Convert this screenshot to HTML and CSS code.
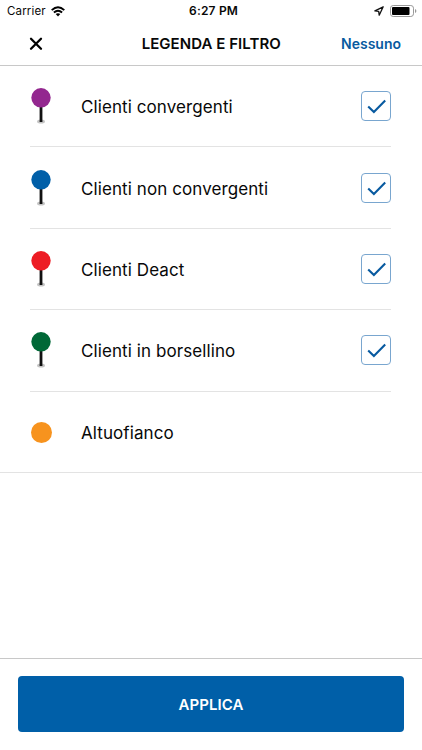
FILE: index.html
```html
<!DOCTYPE html>
<html lang="it">
<head>
<meta charset="utf-8">
<title>Legenda e filtro</title>
<link rel="stylesheet" href="styles.css">
</head>
<body>
<svg class="defs" aria-hidden="true">
  <symbol id="pin" viewBox="0 0 22 38">
    <ellipse cx="11" cy="34.6" rx="4" ry="2" fill="#c4c4c4"/>
    <rect x="9.6" y="18" width="2.8" height="17" fill="#111"/>
    <circle cx="11" cy="10.8" r="9.7" fill="currentColor"/>
  </symbol>
  <symbol id="check" viewBox="0 0 30 30">
    <rect x=".5" y=".5" width="29" height="29" rx="3.5" fill="#fff" stroke="#79a6cf"/>
    <path d="M7.2 15.4L12.9 21.1L24.2 9.6" fill="none" stroke="#085aa0" stroke-width="2.1"/>
  </symbol>
</svg>
<div class="screen">
  <div class="status">
    <span class="carrier">Carrier</span>
    <svg class="wifi" viewBox="0 0 14 11" fill="none" stroke="#000" stroke-width="1.9">
      <path d="M.7 4.1Q7-1.7 13.3 4.1"/>
      <path d="M2.9 6.5Q7 2.8 11.1 6.5"/>
      <path d="M7 10.4L4.7 8.1Q7 6.3 9.3 8.1Z" fill="#000" stroke="none"/>
    </svg>
    <span class="time">6:27 PM</span>
    <svg class="location" viewBox="0 0 10 10"><path d="M9.2 .8L.9 4.9L4.7 5.3L5.2 9.2Z" fill="none" stroke="#111" stroke-width="1.3" stroke-linejoin="round"/></svg>
    <svg class="battery" viewBox="0 0 27 12">
      <rect x=".5" y=".5" width="23" height="11" rx="2.7" fill="#fff" stroke="#999"/>
      <rect x="2" y="2" width="17.5" height="8" rx="1" fill="#000"/>
      <path d="M25 4Q26.4 4.4 26.4 6T25 8Z" fill="#999"/>
    </svg>
  </div>
  <header class="header">
    <svg class="close" viewBox="0 0 14 14"><path d="M2 1.7L12 11.7M12 1.7L2 11.7" stroke="#000" stroke-width="2.3" stroke-linecap="round"/></svg>
    <h1 class="title">LEGENDA E FILTRO</h1>
    <span class="none">Nessuno</span>
  </header>
  <main class="list">
    <div class="row"><svg class="pin purple"><use href="#pin"/></svg><span class="label">Clienti convergenti</span><svg class="box"><use href="#check"/></svg></div>
    <div class="row"><svg class="pin blue"><use href="#pin"/></svg><span class="label">Clienti non convergenti</span><svg class="box"><use href="#check"/></svg></div>
    <div class="row"><svg class="pin red"><use href="#pin"/></svg><span class="label">Clienti Deact</span><svg class="box"><use href="#check"/></svg></div>
    <div class="row"><svg class="pin green"><use href="#pin"/></svg><span class="label">Clienti in borsellino</span><svg class="box"><use href="#check"/></svg></div>
    <div class="row last"><span class="dot"></span><span class="label">Altuofianco</span></div>
  </main>
  <footer class="footer"><button class="apply">APPLICA</button></footer>
</div>
</body>
</html>
```
FILE: styles.css
```css
* { box-sizing: border-box; }
body { margin: 0; background: #fff; color: #080808; font-family: Inter, "Liberation Sans", sans-serif; }
svg { display: block; flex: none; }
.defs { display: none; }
.screen { height: 750px; display: flex; flex-direction: column; overflow: hidden; }
.status { height: 22px; display: grid; grid-template-columns: 44px 138px 1fr 15px 27px; align-items: center; padding: 0 5px 0 7px; flex: none; }
.carrier { font-size: 11.5px; letter-spacing: .15px; }
.wifi { width: 14px; height: 11px; }
.time { font-size: 12px; font-weight: 600; letter-spacing: .2px; }
.carrier, .time { margin-top: -1px; }
.location { width: 10px; height: 10px; margin-left: -1px; }
.battery { width: 27px; height: 12px; margin-top: -1px; }
.header { height: 44px; flex: none; display: grid; grid-template-columns: 90px 1fr 97.5px; align-items: center; padding: 0 21px 0 29px; border-bottom: 1px solid #c8c8c8; }
.close { width: 14px; height: 14px; }
.title { margin: 0; text-align: center; font-size: 15px; font-weight: 600; white-space: nowrap; letter-spacing: .05px; }
.none { text-align: right; color: #085aa0; font-size: 14px; font-weight: 600; }
.list { flex: 1; }
.row { height: 81.4px; margin: 0 31px 0 30px; display: flex; align-items: center; border-bottom: 1px solid #e3e3e3; }
.row.last { margin: 0; padding-left: 30px; }
.pin { width: 22px; height: 38px; margin-right: 29px; }
.purple { color: #93278f; }
.blue { color: #005fa8; }
.red { color: #ed1c24; }
.green { color: #006837; }
.dot { width: 21px; height: 21px; border-radius: 50%; background: #f7931e; margin: 1px 29.5px 0 .5px; }
.label { flex: 1; padding-top: 2px; font-size: 17px; letter-spacing: .09px; white-space: nowrap; }
.box { width: 30px; height: 30px; }
.footer { height: 92px; flex: none; border-top: 1px solid #c8c8c8; padding: 17px 18px 18px; display: flex; }
.apply { flex: 1; border: 0; border-radius: 4px; background: #005fa8; color: #fff; font: 600 15px Inter, "Liberation Sans", sans-serif; letter-spacing: .1px; }
```
